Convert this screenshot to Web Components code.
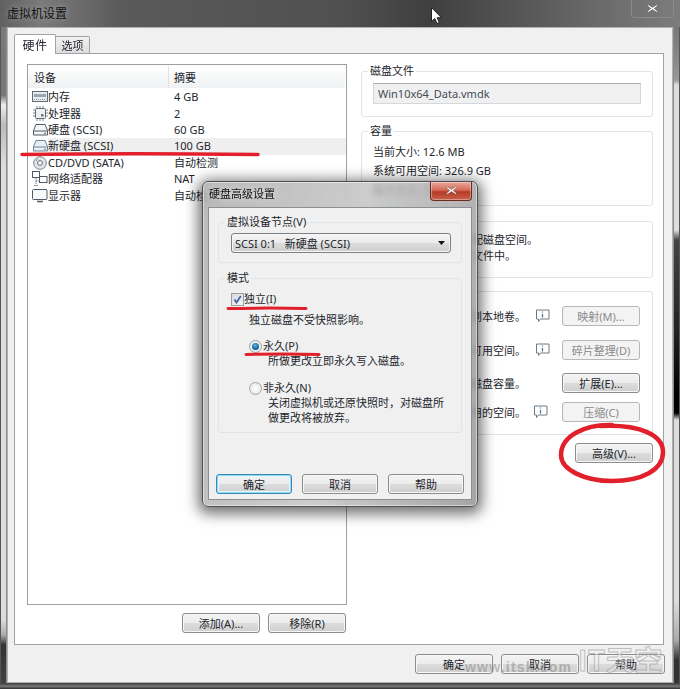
<!DOCTYPE html>
<html lang="zh"><head><meta charset="utf-8"><title>虚拟机设置</title>
<style>
html,body{margin:0;padding:0;background:#3a3a3a;overflow:hidden}
body{font:11px "Noto Sans","Noto Sans CJK SC",sans-serif;color:#23262c}
</style></head><body>
<vm-app></vm-app>
<script>
const FONT=`"Noto Sans","Noto Sans CJK SC",sans-serif`;
const ICONS={
memory:`<svg width="16" height="12" viewBox="0 0 16 12"><rect x=".5" y=".5" width="15" height="10" fill="#e8ecef" stroke="#5f6b75"/><rect x="2" y="3" width="12" height="3" fill="#9aa5ad"/><path d="M2 8.5h12" stroke="#8b959d" stroke-dasharray="1 1"/></svg>`,
cpu:`<svg width="15" height="15" viewBox="0 0 15 15"><rect x="2.5" y="2.5" width="10" height="10" rx="1" fill="#eef0f2" stroke="#5f6b75"/><path d="M4 0v2M7 0v2M10 0v2M4 13v2M7 13v2M10 13v2M0 4h2M0 7h2M0 10h2M13 4h2M13 7h2M13 10h2" stroke="#7d8790"/><rect x="8" y="8" width="2.5" height="2.5" fill="#6b7680"/></svg>`,
disk:`<svg width="15" height="12" viewBox="0 0 15 12"><path d="M3 .5h9l2.5 6v4.5H.5V6.5z" fill="#f4f6f7" stroke="#4f5a66"/><path d="M.5 7h14" stroke="#4f5a66"/><path d="M11 9.2h2" stroke="#4f5a66"/></svg>`,
diskb:`<svg width="15" height="12" viewBox="0 0 15 12"><path d="M3 .5h9l2.5 6v4.5H.5V6.5z" fill="#e8f0f6" stroke="#6a8198"/><path d="M.5 7h14" stroke="#6a8198"/><path d="M11 9.2h2" stroke="#6a8198"/></svg>`,
cd:`<svg width="14" height="14" viewBox="0 0 14 14"><circle cx="7" cy="7" r="6.3" fill="#e4e7ea" stroke="#7b858e"/><circle cx="7" cy="7" r="2.4" fill="#fff" stroke="#5f6b75"/><path d="M3 5a4.6 4.6 0 0 1 2-2" stroke="#8d98a1" fill="none"/></svg>`,
net:`<svg width="16" height="16" viewBox="0 0 16 16"><rect x=".5" y=".5" width="7" height="6" fill="#fff" stroke="#4f5a66"/><rect x="7.5" y="5.5" width="7.5" height="6" fill="#fff" stroke="#4f5a66"/><path d="M4 7v6M4 10h3.500M2 14.500h4" stroke="#6d7780" fill="none" stroke-dasharray="1.500 .8"/></svg>`,
mon:`<svg width="16" height="14" viewBox="0 0 16 14"><rect x=".5" y=".5" width="14.500" height="10" rx="1" fill="#f7f9fa" stroke="#4f5a66"/><path d="M5 12.500h6" stroke="#4f5a66" stroke-width="1.500"/></svg>`,
info:`<svg width="14" height="14" viewBox="0 0 14 14"><path d="M.5 1h12.500v9H4.500l-2 2.500V10H.5z" fill="#fff" stroke="#6c7a86"/><path d="M6.500 2.500v1M6.500 5v3.500" stroke="#3f6f94" stroke-width="1.200"/></svg>`,
x:`<svg width="11" height="9" viewBox="0 0 11 9"><path d="M1.500 .8 5.500 3.400 9.500 .8l1 1-3.300 2.700L10.500 7.200l-1 1L5.500 5.600 1.500 8.200l-1-1L3.800 4.500.5 1.800z" fill="#fff" stroke="#555" stroke-width=".5"/></svg>`
};
function def(name,css,html,init){
  customElements.define(name,class extends HTMLElement{
    connectedCallback(){
      if(this.shadowRoot)return;
      const s=this.attachShadow({mode:'open'});
      s.innerHTML=`<style>${css}</style>`+(typeof html==='function'?html(this):html);
      if(init)init(this,s);
    }
  });
}
def('vm-button',`
:host{display:inline-flex;box-sizing:border-box;width:78px;height:20px;align-items:center;justify-content:center;border:1px solid #8d8d8d;border-radius:3px;font:11px ${FONT};color:#23262c;
background:linear-gradient(#f4f4f4,#ececec 48%,#dcdcdc 52%,#cfcfcf);box-shadow:inset 0 0 0 1px #f6f6f6}
:host([disabled]){background:#f3f3f3;border-color:#b3b8bb;color:#8a8a8a;box-shadow:none}
:host([default]){border-color:#3d86b8;box-shadow:inset 0 0 0 1px #8fdcf2,inset 0 0 0 2px #e4f6fb}
:host([narrow]){width:76px}
`,`<slot></slot>`);
def('vm-group',`
:host{display:block;box-sizing:border-box}
fieldset{box-sizing:border-box;height:100%;margin:0;padding:0 11px;border:1px solid #dde5ec;border-radius:3px;min-width:0}
legend{padding:0 2px;margin-left:-5px;font:11px/14px ${FONT}}
`,h=>`<fieldset><legend>${h.getAttribute('label')||''}</legend><slot></slot></fieldset>`);
def('vm-device',`
:host{display:flex;height:16.4px;align-items:center;font:11px/16px ${FONT}}
.i{width:16px;margin-left:4px;display:flex;justify-content:center;flex:none}
.n{width:126px;white-space:nowrap;flex:none;height:100%;}
.v{white-space:nowrap;height:100%;flex:1}
.n,.v{display:flex;align-items:center}
:host([selected]) .n{background:#efefef}
:host([selected]) .v{background:#efefef}
`,h=>`<span class="i">${ICONS[h.getAttribute('icon')]}</span><span class="n">${h.getAttribute('name')}</span><span class="v">${h.getAttribute('value')}</span>`);
def('vm-devices',`
:host{display:block;box-sizing:border-box;width:320px;height:541px;border:1px solid #9aa1a6;background:#fff;padding-top:1px}
.h{display:flex;height:22px;background:linear-gradient(#fff,#f6f7f8 55%,#eff1f3);margin-bottom:1px;align-items:center;margin-right:1px}
.h span{box-sizing:border-box;display:flex;align-items:center;height:100%}
.h span:first-child{width:141px;padding-left:6px;border-right:1px solid #dfe3e6}
.h span:last-child{padding-left:5px}
`,`<div class="h"><span>设备</span><span>摘要</span></div><slot></slot>`);
def('vm-titlebar',`
:host{display:flex;align-items:center;height:27px;box-sizing:border-box;padding:0 6px 2px 7px;font:12px ${FONT};color:#111;text-shadow:0 0 6px rgba(255,255,255,.4)}
span{flex:1}
`,`<span><slot></slot></span>`);
def('vm-tabs',`
:host{display:flex;align-items:flex-end;height:19px;position:relative;z-index:1;font:11px ${FONT}}
.t{box-sizing:border-box;display:flex;align-items:center;justify-content:center;border:1px solid #9da3a8;border-bottom:none}
.a{width:42px;height:20px;background:#fff;margin-bottom:-1px;border-radius:2px 2px 0 0;font-size:12px;letter-spacing:.5px}
.b{width:35px;height:17px;margin-left:-1px;background:linear-gradient(#f2f2f2,#dcdcdc);border-radius:0 2px 0 0;font-size:11px}
`,`<span class="t a">硬件</span><span class="t b">选项</span>`);
def('vm-checkbox',`
:host{display:flex;align-items:center;font:11px/14px ${FONT}}
i{box-sizing:border-box;width:13px;height:13px;border:1px solid #9a9c9e;background:linear-gradient(135deg,#d6d8dc,#f4f5f6);display:flex;align-items:center;justify-content:center;flex:none}
`,`<i><svg width="9" height="9" viewBox="0 0 9 9"><path d="M1.500 4.500 3.500 7.500 7.800 1" fill="none" stroke="#4a60a8" stroke-width="1.800"/></svg></i><slot></slot>`);
def('vm-radio',`
:host{display:flex;align-items:center;font:11px/14px ${FONT}}
i{box-sizing:border-box;width:13px;height:13px;border:1px solid #a3a4a5;border-radius:50%;background:radial-gradient(#fff,#dfe1e3);display:flex;align-items:center;justify-content:center;margin-right:1px;flex:none}
b{width:7px;height:7px;border-radius:50%;background:radial-gradient(circle at 45% 35%,#5cb6e0,#0f5a8f 70%);display:none}
:host([checked]) b{display:block}
`,`<i><b></b></i><slot></slot>`);
def('vm-select',`
:host{display:flex;box-sizing:border-box;width:220px;height:20px;align-items:center;border:1px solid #7e8184;border-radius:3px;padding:0 5px 0 3px;font:11px ${FONT};white-space:pre;background:linear-gradient(#f4f4f4,#ebebeb 48%,#dcdcdc 52%,#cfcfcf);box-shadow:inset 0 0 0 1px #f6f6f6}
span{flex:1}
`,`<span><slot></slot></span><svg width="7" height="4" viewBox="0 0 7 4"><path d="M0 0h7L3.500 4z" fill="#111"/></svg>`);
def('vm-dialog',`
:host{position:absolute;left:202px;top:181px;width:276px;height:326px;box-sizing:border-box;border-radius:6px;display:flex;flex-direction:column;padding:0 5px 6px;
background:linear-gradient(100deg,rgba(170,170,170,.82),rgba(190,190,190,.78) 50%,rgba(150,150,150,.85));
-webkit-backdrop-filter:blur(3px);backdrop-filter:blur(3px);
border:1px solid #4e4e4e;box-shadow:0 3px 14px 4px rgba(0,0,0,.55),inset 0 0 0 1px rgba(255,255,255,.5)}
.t{height:25px;box-sizing:border-box;padding:0 0 4px 1px;display:flex;align-items:center;font:11px ${FONT};color:#111;text-shadow:0 0 6px rgba(255,255,255,.7);flex:none}
.t span{flex:1}
.c{width:42px;height:19px;margin:-3px 0 0 0;border:1px solid #6e2a22;border-top:none;border-radius:0 0 4px 4px;box-sizing:border-box;background:linear-gradient(#e9a99c,#d56a58 45%,#b53a25 55%,#c9624a);display:flex;align-items:center;justify-content:center;box-shadow:inset 0 0 0 1px rgba(255,255,255,.35)}
.m{flex:1;background:#f0f0f0;border:1px solid #8b8f92;display:flex;flex-direction:column;padding:7px 9px 5px;gap:8px;box-sizing:border-box}
.g1{height:48px}.g2{height:162px}
.f{display:flex;justify-content:space-between;margin:auto -2px 0}
.s{margin-top:4px;margin-left:1px}
vm-checkbox{margin-left:1px;margin-top:7px}
vm-radio{margin-left:19px}
.ds{margin-left:19px;margin-top:6px;font:11px/15px ${FONT}}
.l2{margin-left:38px;font:11px/15px ${FONT}}
`,`<div class="t"><span>硬盘高级设置</span><div class="c">${ICONS.x}</div></div>
<div class="m">
<vm-group class="g1" label="虚拟设备节点(V)"><vm-select class="s">SCSI 0:1   新硬盘 (SCSI)</vm-select></vm-group>
<vm-group class="g2" label="模式">
<vm-checkbox>独立(I)</vm-checkbox>
<div class="ds">独立磁盘不受快照影响。</div>
<vm-radio checked style="margin-top:12px">永久(P)</vm-radio>
<div class="l2">所做更改立即永久写入磁盘。</div>
<vm-radio style="margin-top:13px">非永久(N)</vm-radio>
<div class="l2">关闭虚拟机或还原快照时，对磁盘所<br>做更改将被放弃。</div>
</vm-group>
<div class="f"><vm-button default narrow>确定</vm-button><vm-button narrow>取消</vm-button><vm-button narrow>帮助</vm-button></div>
</div>`);
def('vm-util-row',`
:host{display:flex;align-items:center;height:20px;font:11px ${FONT}}
.t{width:153px;display:flex;justify-content:flex-end;overflow:hidden;white-space:nowrap;flex:none}
.i{width:14px;height:14px;display:flex;flex:none}
.s{flex:1}
`,h=>`<span class="t">${h.getAttribute('text')||''}</span><span class="s"></span><span class="i" style="margin-right:${h.getAttribute('gap')||12}px;visibility:${h.hasAttribute('noinfo')?'hidden':'visible'}">${ICONS.info}</span><slot></slot>`);
def('vm-app',`
:host{display:block;position:relative;width:680px;height:689px;overflow:hidden;filter:blur(.4px);box-sizing:border-box;
background:linear-gradient(90deg,#606060,#7a7a7a 6%,#5a5a5a 18%,#505050 50%,#3f3f3f 63%,#6a6a6a 88%,#7c7c7c)}
.edgeL{position:absolute;left:0;top:27px;height:662px;width:7px;box-sizing:border-box;border-left:1px solid #555;border-right:1px solid #8c8c8c;
background:linear-gradient(#7a7a7a,#777 68px,#eee 78px,#bbb 98px,#dcdcdc 138px,#dcdcdc 593px,#aaa 608px,#333 618px,#444)}
.edgeR{position:absolute;right:0;top:27px;height:662px;width:7px;box-sizing:border-box;border-right:1px solid #555;border-left:1px solid #8c8c8c;
background:linear-gradient(#777,#888 33px,#999 53px,#ddd 58px,#ddd 203px,#444 213px,#222 303px,#000 368px,#000 386px,#ddd 393px,#ddd 573px,#aaa 613px,#333 633px,#333)}
.edgeB{position:absolute;left:0;right:0;bottom:0;height:6px;background:linear-gradient(#3d3d3d,#777 55%,#2e2e2e)}
.client{position:absolute;left:7px;right:7px;top:27px;bottom:6px;box-sizing:border-box;border:1px solid #b0b0b0;background:#f0f0f0;display:flex;flex-direction:column;padding:6px 8px 8px 6px}
.bar{position:absolute;left:0;right:0;top:0}
.close{position:absolute;left:631px;top:0;width:43px;height:18px;box-sizing:border-box;border:1px solid #8a8a8a;border-top:none;border-radius:0 0 4px 4px;display:flex;align-items:center;justify-content:center}
.panel{flex:1;box-sizing:border-box;border:1px solid #9da3a8;background:#fff;display:flex;gap:14px;padding:10px 10px 11px 12px}
.left{width:320px;display:flex;flex-direction:column}
.lb{display:flex;justify-content:flex-end;gap:8px;margin-top:8px;padding-right:1px}
.right{width:292px;display:flex;flex-direction:column}
.foot{display:flex;justify-content:flex-end;gap:8px;margin-top:9px;margin-right:-1px}
.input{box-sizing:border-box;height:21px;width:268px;margin:5px 0 0 0;border:1px solid #d5d8db;border-top-color:#abadb0;background:#f0f0f0;padding:0 4px;display:flex;align-items:center;font:11px ${FONT};color:#444c55}
.cap div{height:19px;display:flex;align-items:center;white-space:pre}
.cap{margin-top:3px}
.g1{height:53px}.g2{height:82px;margin-top:7px}.g3{height:64px;margin-top:8px}.g4{height:151px;margin-top:6px}
.info{font:11px/16px ${FONT};margin-top:4px;white-space:nowrap}
.utils{margin-top:8px;margin-right:1px}
.adv{display:flex;justify-content:flex-end;margin-top:8px}
.wm{position:absolute;left:465px;top:658px;font:bold 14px/18px "Liberation Sans",sans-serif;color:rgba(130,130,130,.5);letter-spacing:1.2px;white-space:nowrap}
.wm2{position:absolute;left:578px;top:645px;font:bold 28px/28px "Noto Sans CJK SC",sans-serif;color:rgba(240,240,240,.35);-webkit-text-stroke:1px rgba(140,140,140,.5);white-space:nowrap;letter-spacing:.5px}
.ink{position:absolute;left:0;top:0;pointer-events:none}
.cur{position:absolute;left:431px;top:7px}
`,`
<div class="bar"><vm-titlebar>虚拟机设置</vm-titlebar></div>
<div class="close">${ICONS.x}</div>
<div class="edgeL"></div><div class="edgeR"></div><div class="edgeB"></div>
<div class="client">
<vm-tabs></vm-tabs>
<div class="panel">
 <div class="left">
  <vm-devices>
   <vm-device icon="memory" name="内存" value="4 GB"></vm-device>
   <vm-device icon="cpu" name="处理器" value="2"></vm-device>
   <vm-device icon="disk" name="硬盘 (SCSI)" value="60 GB"></vm-device>
   <vm-device icon="diskb" name="新硬盘 (SCSI)" value="100 GB" selected></vm-device>
   <vm-device icon="cd" name="CD/DVD (SATA)" value="自动检测"></vm-device>
   <vm-device icon="net" name="网络适配器" value="NAT"></vm-device>
   <vm-device icon="mon" name="显示器" value="自动检测"></vm-device>
  </vm-devices>
  <div class="lb"><vm-button>添加(A)...</vm-button><vm-button>移除(R)</vm-button></div>
 </div>
 <div class="right">
  <vm-group class="g1" label="磁盘文件"><div class="input">Win10x64_Data.vmdk</div></vm-group>
  <vm-group class="g2" label="容量"><div class="cap"><div>当前大小: 12.6 MB</div><div>系统可用空间: 326.9 GB</div><div>最大大小: 100 GB</div></div></vm-group>
  <vm-group class="g3" label="磁盘信息"><div class="info">没有为此硬盘预先分配磁盘空间。<br>硬盘内容存储在单个文件中。</div></vm-group>
  <vm-group class="g4" label="磁盘实用工具"><div class="utils">
   <vm-util-row text="将此虚拟磁盘映射到本地卷。"><vm-button disabled>映射(M)...</vm-button></vm-util-row>
   <vm-util-row style="margin-top:14px" text="整理文件并整合可用空间。"><vm-button disabled>碎片整理(D)</vm-button></vm-util-row>
   <vm-util-row style="margin-top:13px" text="扩展磁盘容量。" noinfo><vm-button>扩展(E)...</vm-button></vm-util-row>
   <vm-util-row style="margin-top:9px" text="压缩磁盘回收未用的空间。" gap="14"><vm-button disabled>压缩(C)</vm-button></vm-util-row>
  </div></vm-group>
  <div class="adv"><vm-button>高级(V)...</vm-button></div>
 </div>
</div>
<div class="foot"><vm-button>确定</vm-button><vm-button>取消</vm-button><vm-button>帮助</vm-button></div>
</div>
<vm-dialog></vm-dialog>
<span class="wm2">IT天空</span><span class="wm">www.itsk.com</span>
<svg class="ink" width="680" height="689" viewBox="0 0 680 689" fill="none" stroke="#e2202c" stroke-linecap="round">
<path d="M22 154.500C90 153.500 180 153.500 258 154.500" stroke-width="3.500"/>
<path d="M228 308.500C255 308 285 308 306 308.500" stroke-width="3"/>
<path d="M246 354.500C270 354 300 354 319 354.500" stroke-width="3"/>
<path d="M612 425C585 424 561 436 561 455C561 470 585 481 612 481C642 481 663 470 663 452C663 435 640 424 600 426" stroke-width="4.500"/>
</svg>
<svg class="cur" width="11" height="17" viewBox="0 0 11 17"><path d="M.5.500v14l3.300-3 2.200 5 2.300-1-2.200-4.800H10.500z" fill="#fff" stroke="#222"/></svg>
`);
</script>
</body></html>
